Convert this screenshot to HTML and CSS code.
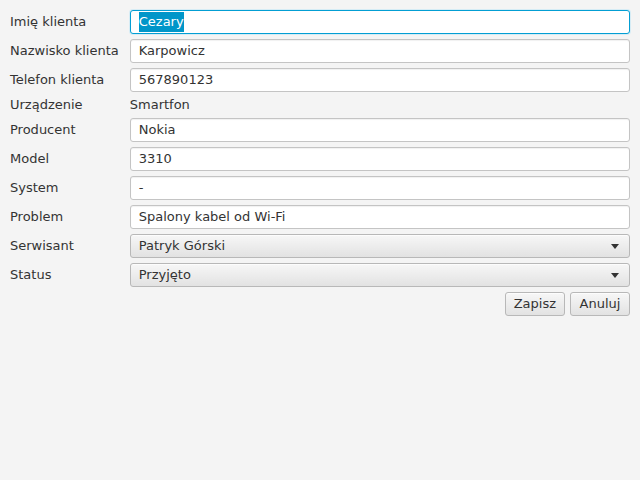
FILE: index.html
```html
<!DOCTYPE html>
<html lang="pl">
<head>
<meta charset="utf-8">
<link rel="stylesheet" href="styles.css">
</head>
<body>
<div class="form">
  <span class="lbl">Imię klienta</span>
  <div class="field focused"><span class="sel">Cezary</span></div>

  <span class="lbl">Nazwisko klienta</span>
  <div class="field">Karpowicz</div>

  <span class="lbl">Telefon klienta</span>
  <div class="field">567890123</div>

  <span class="lbl short">Urządzenie</span>
  <span class="value short">Smartfon</span>

  <span class="lbl">Producent</span>
  <div class="field">Nokia</div>

  <span class="lbl">Model</span>
  <div class="field">3310</div>

  <span class="lbl">System</span>
  <div class="field">-</div>

  <span class="lbl">Problem</span>
  <div class="field">Spalony kabel od Wi-Fi</div>

  <span class="lbl">Serwisant</span>
  <div class="combo"><span>Patryk Górski</span><span class="arrow"></span></div>

  <span class="lbl">Status</span>
  <div class="combo"><span>Przyjęto</span><span class="arrow"></span></div>

  <div class="buttons">
    <div class="btn">Zapisz</div>
    <div class="btn">Anuluj</div>
  </div>
</div>
</body>
</html>
```

FILE: styles.css
```css
html, body {
  margin: 0;
  padding: 0;
  background: #f4f4f4;
  width: 640px;
  height: 480px;
  overflow: hidden;
}

body {
  font-family: "DejaVu Sans", sans-serif;
  font-size: 13px;
  color: #333333;
}

.form {
  display: grid;
  grid-template-columns: auto 1fr;
  column-gap: 11px;
  row-gap: 5px;
  padding: 10px;
}

.lbl {
  align-self: center;
  line-height: 16px;
}

.short {
  height: 16px;
}

.value {
  align-self: center;
  line-height: 16px;
}

.field {
  box-sizing: border-box;
  height: 24px;
  line-height: 22px;
  padding: 0 8px;
  background: #ffffff;
  border: 1px solid #c4c4c4;
  border-radius: 3px;
  box-shadow: inset 0 1px 1px rgba(0, 0, 0, 0.06);
  white-space: nowrap;
}

.field.focused {
  border-color: #039ed3;
  box-shadow: 0 0 0 1px #d6ecf5;
  background: #ffffff;
}

.sel {
  background: #0096c9;
  color: #ffffff;
  padding: 2px 0 3px;
}

.combo,
.btn {
  box-sizing: border-box;
  height: 24px;
  line-height: 22px;
  border: 1px solid #b8b8b8;
  border-radius: 3px;
  background: linear-gradient(#f7f7f7, #e2e2e2);
  box-shadow: inset 0 1px 0 rgba(255, 255, 255, 0.7);
  white-space: nowrap;
}

.combo {
  display: flex;
  justify-content: space-between;
  align-items: center;
  padding: 0 10px 0 8px;
}

.arrow {
  width: 0;
  height: 0;
  border-left: 4px solid transparent;
  border-right: 4px solid transparent;
  border-top: 5px solid #333333;
}

.buttons {
  grid-column: 2;
  display: flex;
  justify-content: flex-end;
  gap: 5px;
}

.btn {
  min-width: 60px;
  padding: 0 8px;
  text-align: center;
}
```
